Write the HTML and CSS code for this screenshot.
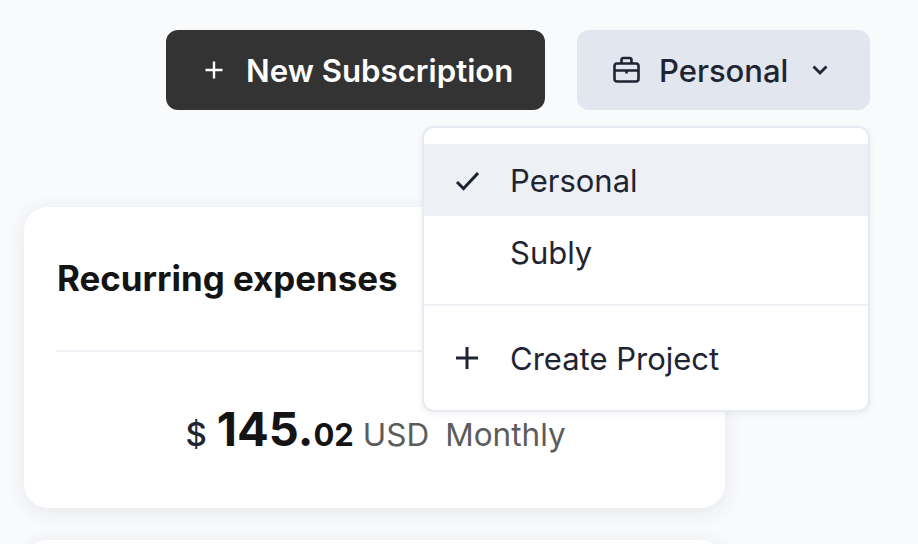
FILE: index.html
```html
<!DOCTYPE html>
<html lang="en">
<head>
  <meta charset="UTF-8" />
  <title>Subly</title>
  <link rel="stylesheet" href="styles.css">
</head>
<body>
  <!-- Top actions -->
  <header class="topbar">
    <button class="btn btn-dark">
      <svg class="icon-plus" width="18" height="18" viewBox="0 0 18 18"><path d="M9 0.5v17M0.5 9h17" /></svg>
      <span>New Subscription</span>
    </button>
    <div class="project-switch">
      <button class="btn btn-light">
        <svg class="icon-case" width="28" height="28" viewBox="0 0 28 28"><rect x="2.5" y="7.5" width="24" height="18" rx="2.5" /><path d="M9.5 7.5V4a2 2 0 0 1 2-2h6a2 2 0 0 1 2 2v3.5M2.5 14.5h24M14.5 14.5v3" /></svg>
        <span>Personal</span>
        <svg class="icon-chevron" width="16" height="10" viewBox="0 0 16 10"><path d="M1.5 1.5 8 8l6.5-6.5" /></svg>
      </button>
      <!-- Dropdown -->
      <div class="menu">
        <div class="menu-item active">
          <svg class="menu-icon" width="24" height="24" viewBox="0 0 24 24"><path d="M2 14l6.5 6.5L23 5" /></svg>
          <span>Personal</span>
        </div>
        <div class="menu-item">
          <span class="menu-icon"></span>
          <span>Subly</span>
        </div>
        <hr class="menu-sep" />
        <div class="menu-item">
          <svg class="menu-icon" width="24" height="24" viewBox="0 0 24 24"><path d="M12 1v22M1 12h22" /></svg>
          <span>Create Project</span>
        </div>
      </div>
    </div>
  </header>

  <main class="content">
    <section class="card">
      <h2 class="card-title">Recurring expenses</h2>
      <div class="card-total">
        <span class="currency">$</span>
        <strong class="amount">145.<small>02</small></strong>
        <span class="unit">USD</span>
        <span class="unit period">Monthly</span>
      </div>
    </section>
    <section class="card card-next"></section>
  </main>
</body>
</html>
```

FILE: styles.css
```css
* {
  box-sizing: border-box;
}

body {
  margin: 0;
  height: 544px;
  overflow: hidden;
  background: #f9fafc;
  color: #1f2433;
  font-family: Inter, "Liberation Sans", sans-serif;
}

/* Top actions */
.topbar {
  display: flex;
  justify-content: flex-end;
  gap: 32px;
  padding: 30px 48px 0 0;
}

.btn {
  display: flex;
  align-items: center;
  height: 80px;
  border: none;
  border-radius: 12px;
  font-family: inherit;
  font-size: 31px;
}

.btn-dark {
  width: 379px;
  padding-left: 39px;
  gap: 23px;
  background: #333333;
  color: #fff;
  font-size: 31.2px;
  font-weight: 600;
}

.btn-dark span {
  margin-top: 2px;
}

.btn-light {
  width: 293px;
  padding-left: 35px;
  background: #e2e6ee;
  color: #1f2433;
  font-weight: 500;
}

.btn-light span {
  margin-left: 19px;
}

.icon-plus path {
  fill: none;
  stroke: #fff;
  stroke-width: 2.4;
}

.icon-case {
  fill: none;
  stroke: #1f2433;
  stroke-width: 2.6;
}

.icon-chevron {
  margin-left: 24px;
  fill: none;
  stroke: #1f2433;
  stroke-width: 2.8;
}

/* Dropdown */
.project-switch {
  position: relative;
}

.menu {
  position: absolute;
  top: 96px;
  right: 0;
  width: 448px;
  height: 286px;
  padding-top: 16px;
  background: #fff;
  border: 2px solid #e6eaf1;
  border-radius: 12px;
  box-shadow: 0 2px 6px rgba(30, 40, 60, 0.06);
  z-index: 10;
}

.menu-item {
  display: flex;
  align-items: center;
  gap: 31px;
  height: 72px;
  padding-left: 31px;
  font-size: 31px;
  color: #1f2433;
}

.menu-item.active {
  background: #edf0f5;
}

.menu-icon {
  flex: none;
  width: 24px;
  height: 24px;
  fill: none;
  stroke: #1f2433;
  stroke-width: 3;
}

.menu-sep {
  height: 2px;
  margin: 16px 0;
  border: none;
  background: #edf0f5;
}

/* Cards */
.content {
  display: flex;
  flex-direction: column;
  gap: 32px;
  width: 701px;
  margin: 97px 0 0 24px;
}

.card {
  flex: none;
  height: 301px;
  padding: 0 32px;
  background: #fff;
  border-radius: 24px;
  box-shadow: 0 4px 20px rgba(30, 40, 60, 0.09);
}

.card-title {
  margin: 0;
  height: 145px;
  padding: 51px 0 0 1px;
  border-bottom: 2px solid #eef1f5;
  font-size: 34.9px;
  font-weight: 700;
  line-height: 40px;
  color: #141414;
}

.card-total {
  display: flex;
  justify-content: center;
  align-items: baseline;
  padding: 45px 0 0 2px;
  font-size: 31.5px;
  line-height: 64px;
}

.currency {
  margin-right: 10px;
  font-size: 33px;
  font-weight: 500;
}

.amount {
  font-size: 47px;
  font-weight: 700;
  color: #141414;
}

.amount small {
  font-size: 31px;
}

.unit {
  margin-left: 9px;
  color: #5c5c5c;
}

.period {
  margin-left: 16px;
}
```
